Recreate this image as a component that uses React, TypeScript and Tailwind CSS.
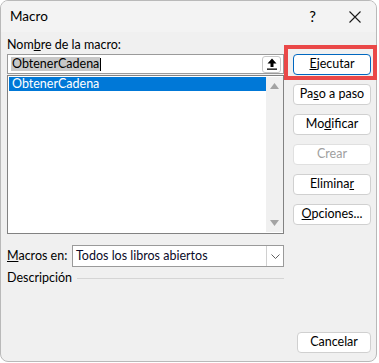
import React from "react";

function Btn({ children, primary, disabled }: { children: React.ReactNode; primary?: boolean; disabled?: boolean }) {
  return (
    <div
      className={
        "h-[21px] w-[78px] rounded-[4px] bg-white flex items-center justify-center text-[12.5px] leading-none border " +
        (primary ? "border-[#0067c0]" : disabled ? "border-[#e0e0e0] text-[#a0a0a0] bg-[#fbfbfb]" : "border-[#d0d0d0] text-black")
      }
    >
      {children}
    </div>
  );
}

export default function App() {
  return (
    <div className="w-[379px] h-[363px] bg-white relative font-['Lato',sans-serif] text-black">
      <div className="w-[377px] h-[362px] bg-[#f0f0f0] border border-[#b9b9b9] rounded-[8px] overflow-hidden flex flex-col">
        {/* title bar */}
        <div className="h-[31px] bg-[#f3f3f3] flex items-center pl-[9px] text-[13.5px] shrink-0">
          <span>Macro</span>
          <span className="ml-auto mr-[33px] text-[15px]">?</span>
          <svg width="12" height="12" viewBox="0 0 12 12" className="mr-[15px]">
            <path d="M0.5 0.5 L11.5 11.5 M11.5 0.5 L0.5 11.5" stroke="#1a1a1a" strokeWidth="1.1" />
          </svg>
        </div>
        {/* body */}
        <div className="flex-1 flex flex-col pl-[6px] pr-[5px] pt-[5px] pb-[8px] text-[12.5px]">
          <div className="flex">
            <div className="w-[277px] flex flex-col">
              <div className="h-[16px] leading-[16px]">
                Nom<span className="underline">b</span>re de la macro:
              </div>
              <div className="mt-[1px] h-[20px] bg-white border border-[#9a9a9a] flex items-center pl-[3px] pr-[2px]">
                <span className="bg-[#c8c8c8] leading-[14px] px-[1px]">ObtenerCadena</span>
                <span className="w-px h-[13px] bg-black"></span>
                <div className="ml-auto w-[19px] h-[17px] border border-[#c8c8c8] rounded-[3px] bg-white flex items-center justify-center">
                  <svg width="10" height="12" viewBox="0 0 10 12">
                    <path d="M5 0.5 L9.5 5.5 L6.5 5.5 L6.5 9 L3.5 9 L3.5 5.5 L0.5 5.5 Z" fill="#000" />
                    <rect x="0" y="10.5" width="10" height="1.3" fill="#000" />
                  </svg>
                </div>
              </div>
              <div className="mt-[1px] h-[159px] bg-white border border-[#828282] flex p-px pr-0">
                <div className="flex-1">
                  <div className="h-[14px] bg-[#0078d7] text-white leading-[14px] pl-[3px]">ObtenerCadena</div>
                </div>
                <div className="w-[17px] bg-[#f0f0f0] flex flex-col items-center justify-between py-[6px]">
                  <svg width="9" height="6" viewBox="0 0 9 6">
                    <path d="M4.5 0 L9 6 L0 6 Z" fill="#a3a3a3" />
                  </svg>
                  <svg width="9" height="6" viewBox="0 0 9 6">
                    <path d="M0 0 L9 0 L4.5 6 Z" fill="#a3a3a3" />
                  </svg>
                </div>
              </div>
            </div>
            <div className="ml-[9px] mt-[17px] flex flex-col gap-[9px]">
              <Btn primary>
                <span><span className="underline">E</span>jecutar</span>
              </Btn>
              <Btn>
                <span>Pa<span className="underline">s</span>o a paso</span>
              </Btn>
              <Btn>
                <span>Mo<span className="underline">d</span>ificar</span>
              </Btn>
              <Btn disabled>
                <span>Crear</span>
              </Btn>
              <Btn>
                <span>Elimina<span className="underline">r</span></span>
              </Btn>
              <Btn>
                <span><span className="underline">O</span>pciones...</span>
              </Btn>
            </div>
          </div>
          {/* Macros en */}
          <div className="mt-[11px] h-[22px] flex items-center w-[277px]">
            <div className="w-[65px]">
              <span className="underline">M</span>acros en:
            </div>
            <div className="w-[212px] h-[22px] bg-white border border-[#9a9a9a] flex items-center">
              <span className="pl-[3px] text-[#0a0a28]">Todos los libros abiertos</span>
              <div className="ml-auto w-[17px] h-full border-l border-[#d0d0d0] flex items-center justify-center">
                <svg width="9" height="5" viewBox="0 0 9 5">
                  <path d="M0.5 0.5 L4.5 4.5 L8.5 0.5" stroke="#606060" strokeWidth="1" fill="none" />
                </svg>
              </div>
            </div>
          </div>
          {/* Descripcion */}
          <div className="mt-[3px] h-[16px] flex items-center w-[277px]">
            <span>Descripción</span>
            <div className="ml-[5px] flex-1 h-px bg-[#d5d5d5]"></div>
          </div>
          <div className="mt-auto flex justify-end">
            <div className="h-[21px] w-[74px] rounded-[4px] bg-white border border-[#d0d0d0] flex items-center justify-center text-[12.5px]">
              Cancelar
            </div>
          </div>
        </div>
      </div>
      {/* red highlight */}
      <div className="absolute left-[284px] top-[45px] w-[93px] h-[35px] border-[4px] border-[#ea4848]"></div>
    </div>
  );
}
